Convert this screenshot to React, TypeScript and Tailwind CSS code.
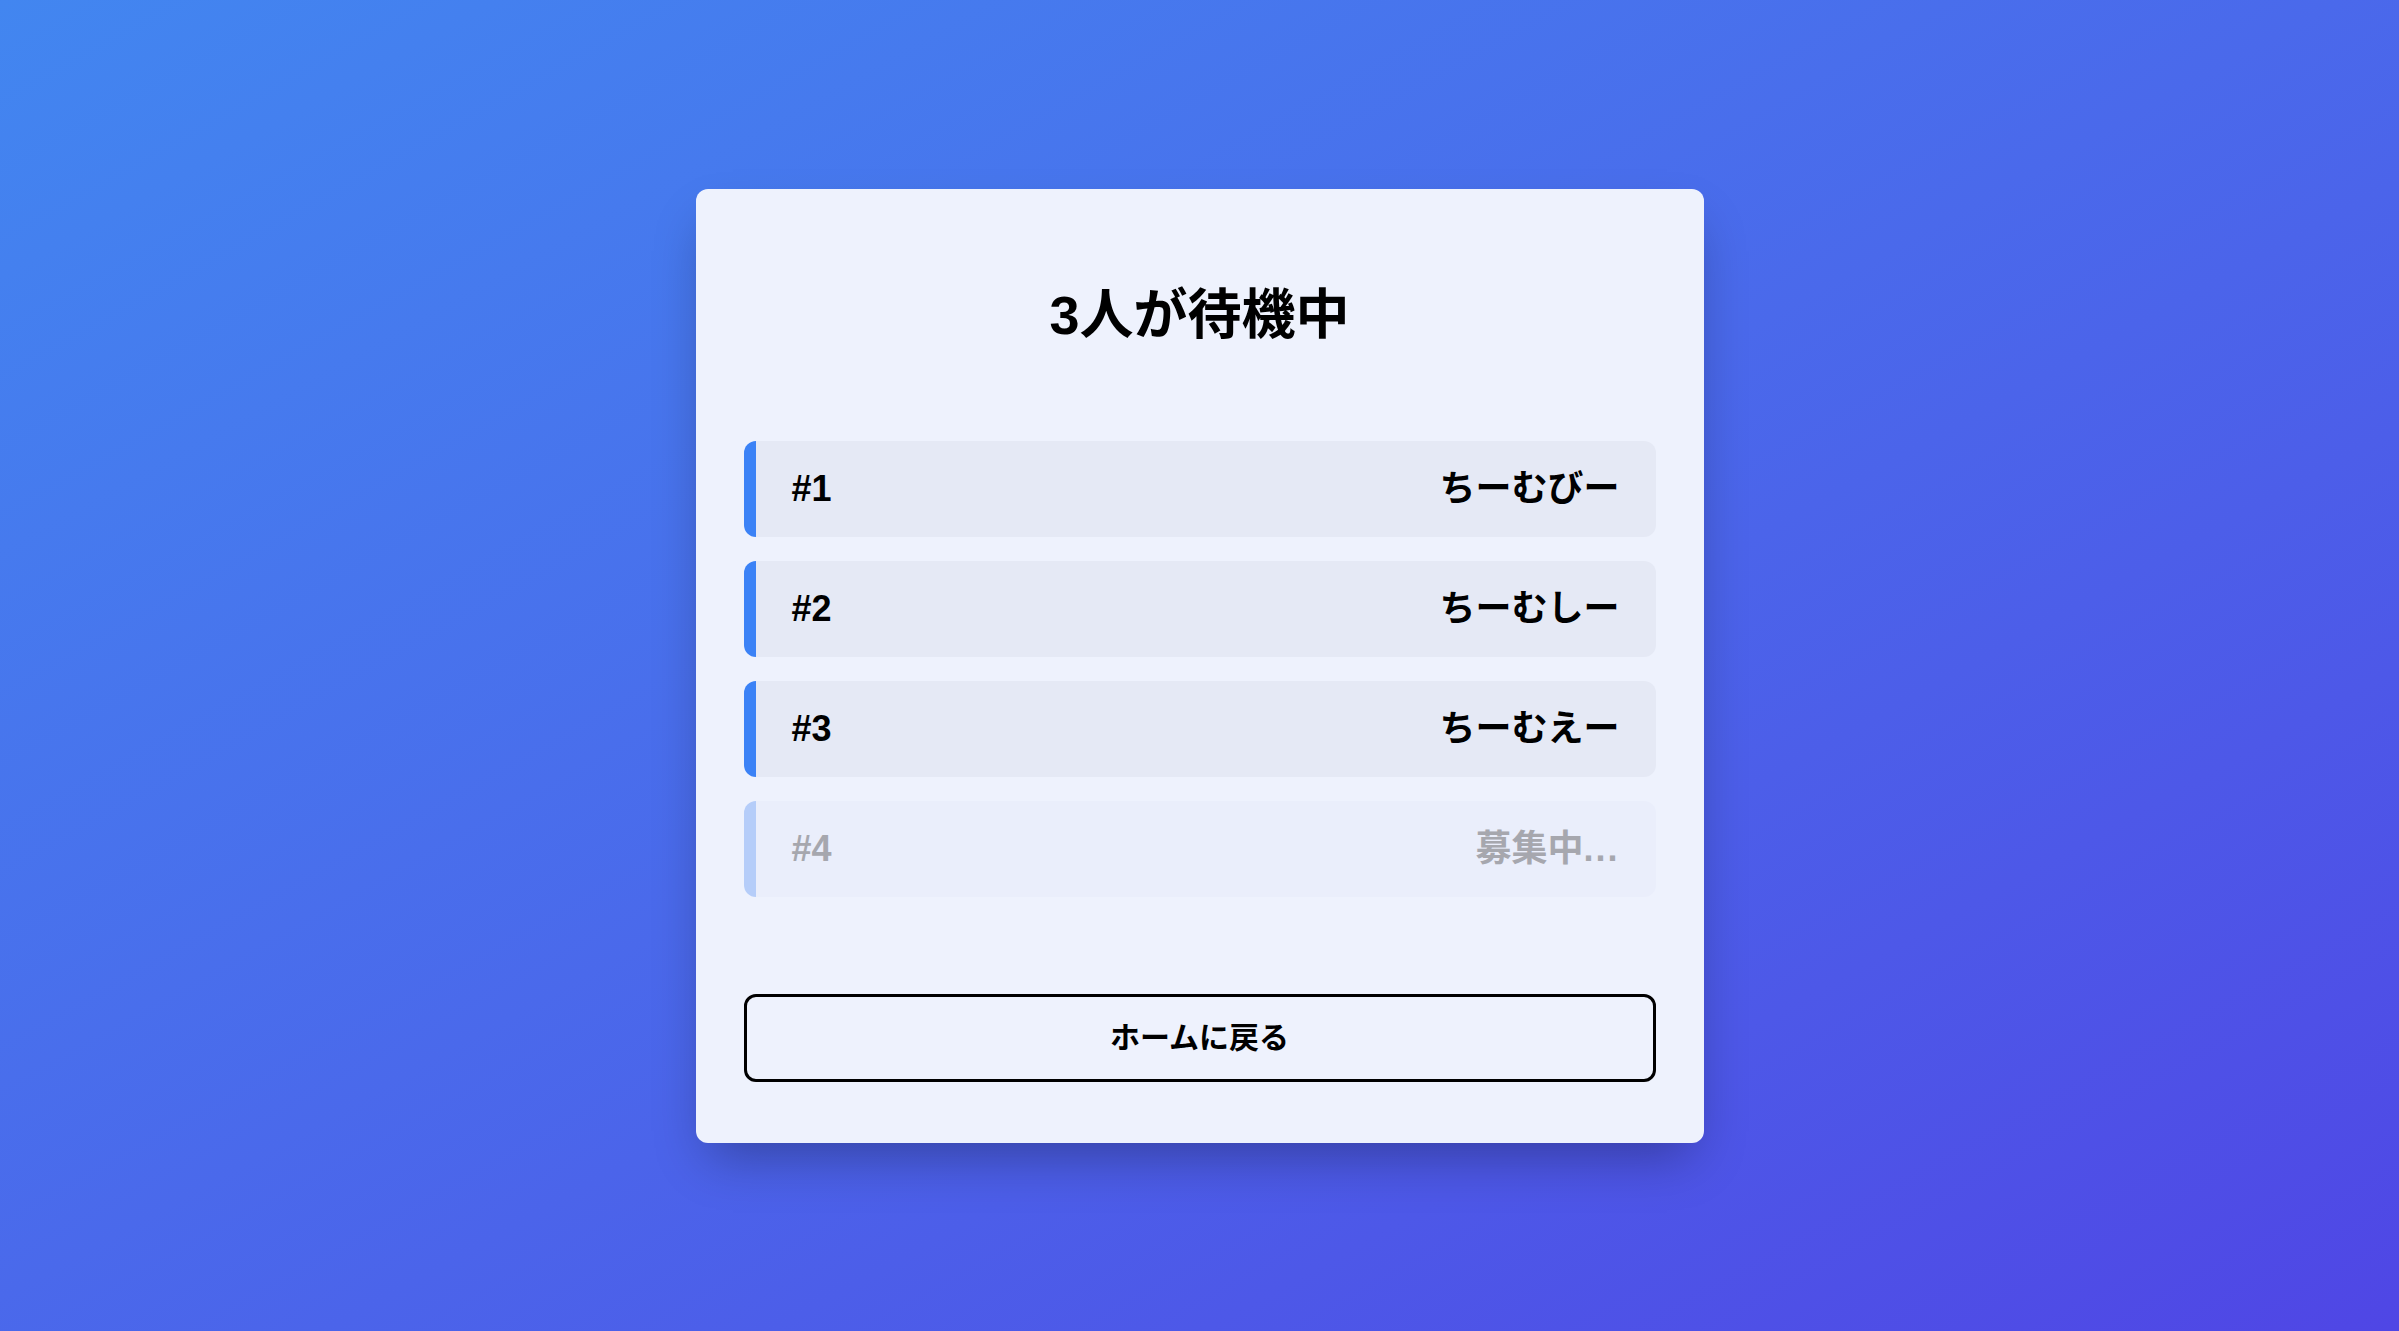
const players = [
    { no: 1, name: 'ちーむびー' },
    { no: 2, name: 'ちーむしー' },
    { no: 3, name: 'ちーむえー' },
]

const WaitingRoom = () => {
    return (
        <div
            className="min-h-screen w-full flex items-center justify-center bg-linear-to-br from-[#4286f0] to-[#4f46e5]"
            style={{ fontFamily: '"Liberation Sans", Arial, "Noto Sans CJK JP", sans-serif' }}
        >
            <div className="w-[1008px] rounded-[12px] bg-[#eef2fd] px-[48px] pt-[48px] pb-[61px] shadow-[0_25px_50px_-12px_rgba(0,0,0,0.3)]">
                <h1 className="mt-[48px] mb-[96px] text-center text-[54px] leading-[60px] font-bold text-black">
                    3人が待機中
                </h1>
                <ul className="flex flex-col gap-[24px]">
                    {players.map((p) => (
                        <Row key={p.no} no={p.no} name={p.name} />
                    ))}
                    <li className="h-[96px] flex items-center justify-between rounded-[12px] border-l-[12px] border-[#b5cdf9] bg-[#eaeefb] pl-[36px] pr-[36px] text-[36px] font-bold text-[#a6a7ae]">
                        <span>#4</span>
                        <span>
                            募集中<span className="tracking-[2px]">...</span>
                        </span>
                    </li>
                </ul>
                <button className="mt-[97px] w-full h-[88px] rounded-[12px] border-[3px] border-black bg-transparent text-[30px] font-bold text-black">
                    ホームに戻る
                </button>
            </div>
        </div>
    )
}

interface IRow {
    no: number;
    name: string;
}
const Row = ({ no, name }: IRow) => {
    return (
        <li className="h-[96px] flex items-center justify-between rounded-[12px] border-l-[12px] border-[#3b82f6] bg-[#e5e9f5] pl-[36px] pr-[36px] text-[36px] font-bold text-black">
            <span>#{no}</span>
            <span>{name}</span>
        </li>
    )
}

export default function App() {
    return <WaitingRoom />
}
